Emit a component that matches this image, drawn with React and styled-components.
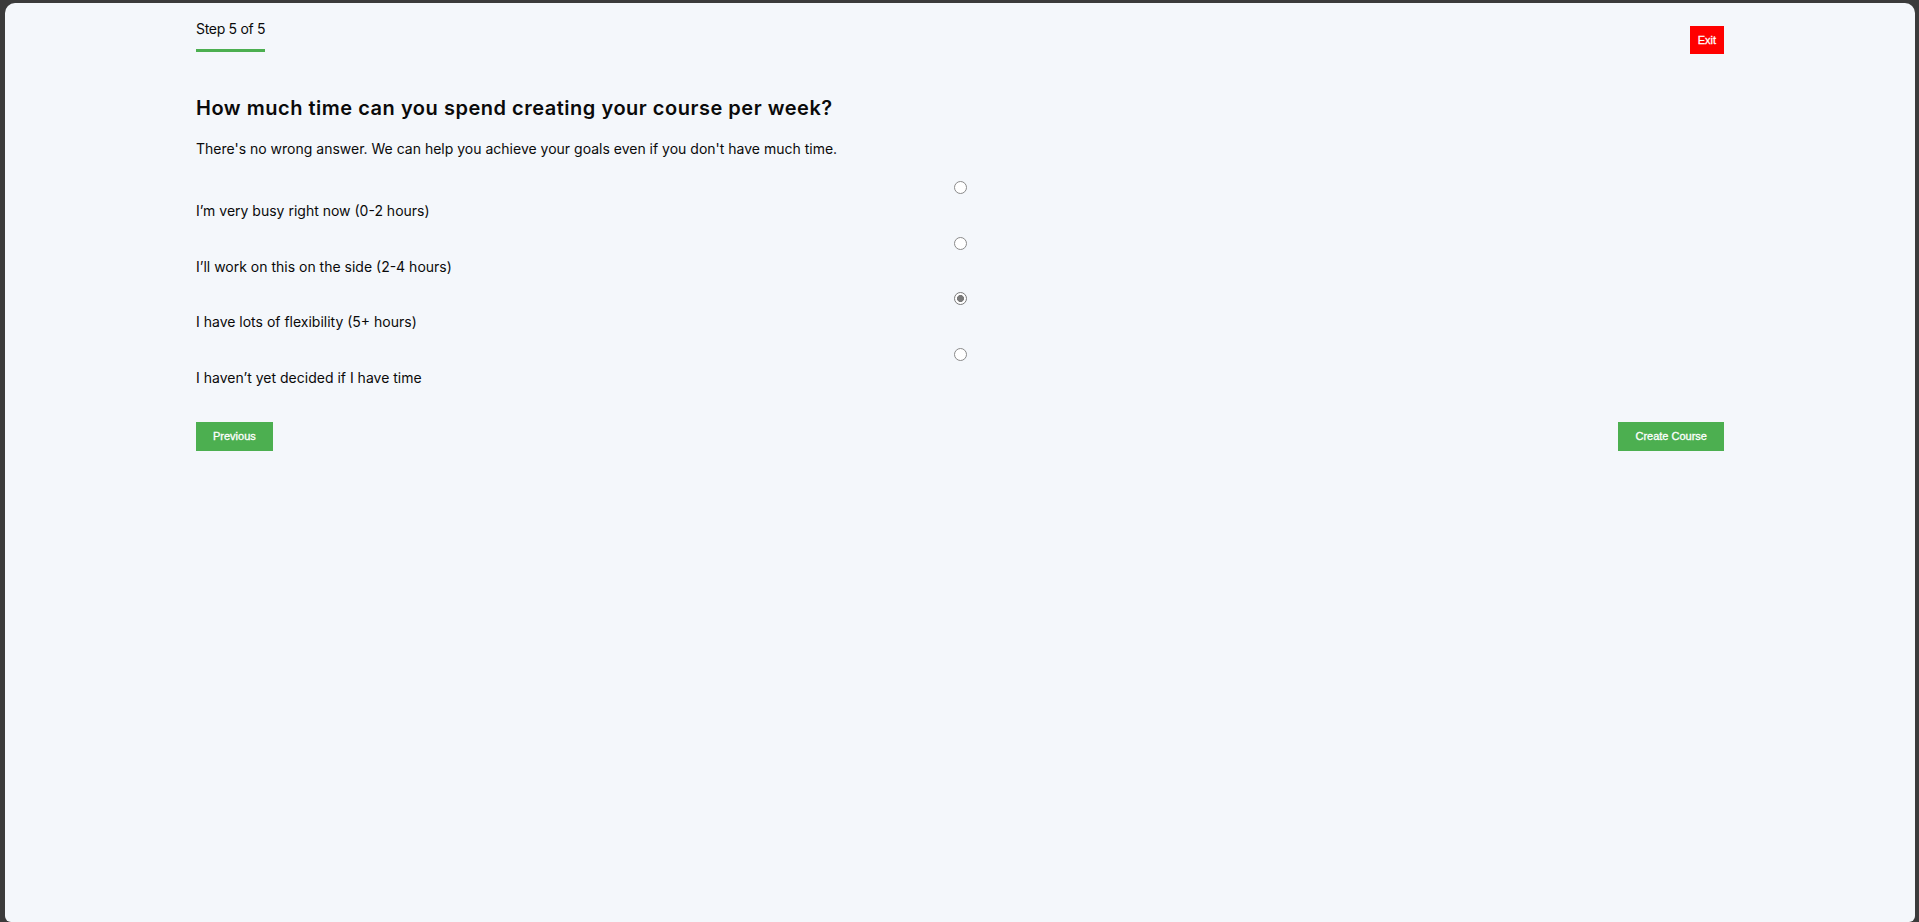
import React, { useState } from "react";
import styled, { createGlobalStyle } from "styled-components";

const GlobalStyle = createGlobalStyle`
  html, body {
    margin: 0;
    padding: 0;
  }
  body {
    background: #3b3b3b;
    font-family: "Inter", "Noto Sans", sans-serif;
    color: #0a0a0a;
  }
  * { box-sizing: border-box; }
`;

const Frame = styled.div`
  min-height: 922px;
  padding: 3px 4px 0 5px;
  display: flex;
`;

const Panel = styled.main`
  flex: 1;
  background: #f4f7fb;
  border-radius: 10px 10px 6px 6px;
`;

const Container = styled.div`
  width: 80%;
  margin: 0 auto;
  padding-top: 15px;
  display: flex;
  flex-direction: column;
`;

const Header = styled.header`
  display: flex;
  justify-content: space-between;
  align-items: flex-start;
  height: 34px;
`;

const StepLabel = styled.div`
  font-size: 14px;
  line-height: 21px;
  letter-spacing: -0.3px;
  padding-bottom: 10px;
  border-bottom: 3px solid #4caf50;
`;

const Button = styled.button`
  border: none;
  border-radius: 0;
  background: ${(p) => (p.$danger ? "#ff0000" : "#4caf50")};
  color: #fff;
  font-family: "Liberation Sans", Arial, sans-serif;
  font-size: 11px;
  -webkit-text-stroke: 0.3px #fff;
  height: ${(p) => (p.$danger ? "28px" : "29px")};
  padding: 0 ${(p) => (p.$danger ? "8px" : "17px")};
  margin-top: ${(p) => p.$offset || 0}px;
  cursor: pointer;
`;

const Title = styled.h1`
  margin: 41px 0 0;
  font-size: 20px;
  line-height: 30px;
  font-weight: 600;
  letter-spacing: 0.52px;
`;

const Subtitle = styled.p`
  margin: 15px 0 0;
  font-size: 14px;
  line-height: 21px;
`;

const OptionList = styled.div`
  margin-top: 22px;
  display: flex;
  flex-direction: column;
  gap: 15.5px;
`;

const Option = styled.label`
  display: flex;
  flex-direction: column;
  gap: 6px;
  cursor: pointer;
`;

const Radio = styled.input.attrs({ type: "radio" })`
  appearance: none;
  -webkit-appearance: none;
  align-self: center;
  margin: 0;
  width: 13px;
  height: 13px;
  border-radius: 50%;
  border: 1px solid #8a8a8a;
  background: #fff;
  &:checked {
    border-color: #7a7a7a;
    background: radial-gradient(circle, #7a7a7a 0 3.2px, #fff 3.8px);
  }
`;

const OptionText = styled.span`
  font-size: 14px;
  line-height: 21px;
`;

const Actions = styled.div`
  margin-top: 34px;
  display: flex;
  justify-content: space-between;
`;

const options = [
  "I’m very busy right now (0-2 hours)",
  "I’ll work on this on the side (2-4 hours)",
  "I have lots of flexibility (5+ hours)",
  "I haven’t yet decided if I have time",
];

export default function App() {
  const [choice, setChoice] = useState(2);
  return (
    <>
      <GlobalStyle />
      <Frame>
        <Panel>
          <Container>
            <Header>
              <StepLabel>Step 5 of 5</StepLabel>
              <Button $danger $offset={8}>Exit</Button>
            </Header>
            <Title>How much time can you spend creating your course per week?</Title>
            <Subtitle>
              There's no wrong answer. We can help you achieve your goals even if you don't have much time.
            </Subtitle>
            <OptionList>
              {options.map((o, i) => (
                <Option key={o}>
                  <Radio name="time" checked={choice === i} onChange={() => setChoice(i)} />
                  <OptionText>{o}</OptionText>
                </Option>
              ))}
            </OptionList>
            <Actions>
              <Button>Previous</Button>
              <Button>Create Course</Button>
            </Actions>
          </Container>
        </Panel>
      </Frame>
    </>
  );
}
